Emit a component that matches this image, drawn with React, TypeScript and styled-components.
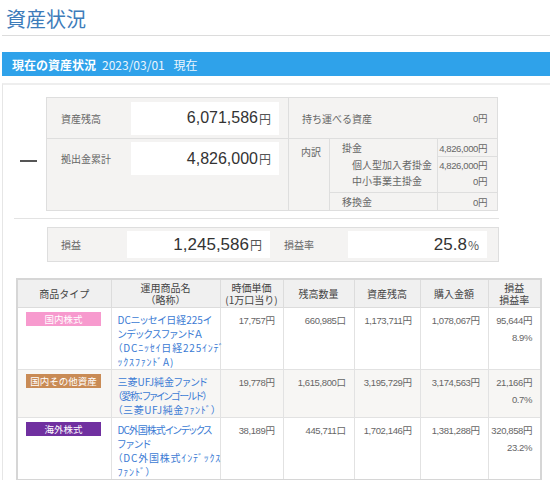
import React from "react";
import styled, { createGlobalStyle } from "styled-components";

const Global = createGlobalStyle`
  html, body { margin: 0; padding: 0; background: #fff; overflow: hidden; }
  body { font-family: "Liberation Sans", "Noto Sans CJK JP", sans-serif; color: #333; }
`;

const Page = styled.div`
  width: 560px;
  height: 480px;
  overflow: hidden;
`;

const Title = styled.h1`
  margin: 0 0 0 2px;
  padding: 7px 0 0 4px;
  height: 28px;
  font-size: 20px;
  font-weight: normal;
  line-height: 24px;
  color: #3d7cba;
  border-bottom: 1px solid #dcdcdc;
  font-family: "Noto Sans CJK JP", sans-serif;
`;

const Bar = styled.div`
  margin: 16px 0 0 2px;
  height: 24px;
  background: #2fa2ea;
  display: flex;
  align-items: center;
  padding-left: 10px;
  gap: 6px;
  color: #fff;
  font-size: 12px;
  font-family: "Noto Sans CJK JP", sans-serif;
`;

const BarStrong = styled.span`
  font-weight: bold;
`;

const BarSub = styled.span`
  color: #eaf5fd;
  word-spacing: 6px;
`;

const Panel = styled.div`
  margin: 7px 0 0 2px;
  border-top: 2px solid #eeeeee;
  border-left: 1px solid #e6e6e6;
  padding-top: 12px;
  height: 400px;
`;

const TopRow = styled.div`
  display: flex;
`;

const Dash = styled.div`
  width: 17px;
  height: 2px;
  background: #555;
  margin: 63px 9px 0 17px;
`;

const SummaryBox = styled.div`
  width: 450px;
  height: 112px;
  border: 1px solid #dedede;
  display: grid;
  grid-template-columns: 84px 157px 41px 108px 60px;
  grid-template-rows: 40px 18px 36px 18px;
  background: #f4f3f2;
  font-family: "Noto Sans CJK JP", sans-serif;
`;

const Cell = styled.div<{ $area: string; $right?: boolean; $top?: boolean; $left?: boolean; $pad?: number; $align?: string }>`
  grid-area: ${(p) => p.$area};
  display: flex;
  align-items: ${(p) => p.$align || "center"};
  justify-content: ${(p) => (p.$right ? "flex-end" : "flex-start")};
  border-top: ${(p) => (p.$top ? "1px solid #dedede" : "none")};
  border-left: ${(p) => (p.$left ? "1px solid #dedede" : "none")};
  padding: 0 ${(p) => (p.$right ? 10 : 0)}px 0 ${(p) => p.$pad ?? 0}px;
  box-sizing: border-box;
  font-size: 10px;
  color: #666;
  white-space: nowrap;
`;

const Label = styled.div<{ $pt?: number }>`
  font-size: 10px;
  color: #666;
  padding-top: ${(p) => p.$pt ?? 0}px;
`;

const ValueBox = styled.div<{ $w: number }>`
  width: ${(p) => p.$w}px;
  height: 33px;
  background: #fff;
  display: flex;
  align-items: center;
  justify-content: flex-end;
  padding-right: 8px;
  box-sizing: border-box;
  font-family: "Liberation Sans", "Noto Sans CJK JP", sans-serif;
  font-size: 16px;
  color: #333;
`;

const Unit = styled.span`
  font-size: 12px;
  color: #555;
  margin-left: 1px;
  font-family: "Noto Sans CJK JP", sans-serif;
`;

const Num = styled.span`
  font-family: "Liberation Sans", "Noto Sans CJK JP", sans-serif;
  font-size: 9.5px;
  color: #666;
  letter-spacing: -0.4px;
  white-space: nowrap;
`;

const Sep = styled.div`
  margin: 7px 0 0 11px;
  width: 485px;
  height: 1px;
  background: #e3e3e3;
`;

const ProfitBox = styled.div`
  margin: 8px 0 0 44px;
  width: 450px;
  height: 33px;
  border: 1px solid #dedede;
  background: #f4f3f2;
  display: flex;
  align-items: center;
  font-family: "Noto Sans CJK JP", sans-serif;
`;

const ProfitLabel = styled.div<{ $w: number; $pl: number }>`
  width: ${(p) => p.$w}px;
  padding-left: ${(p) => p.$pl}px;
  box-sizing: border-box;
  font-size: 10px;
  color: #666;
`;

const ProfitValue = styled(ValueBox)`
  height: 27px;
  font-size: 17px;
`;

const Table = styled.table`
  margin: 16px 0 0 13px;
  width: 524px;
  border-collapse: collapse;
  table-layout: fixed;
  border: 2px solid #d6d6d6;
  border-bottom-width: 3px;
  font-family: "Noto Sans CJK JP", sans-serif;
`;

const Th = styled.th`
  height: 27px;
  background: #f0f0f0;
  border: 1px solid #dcdcdc;
  font-size: 10px;
  font-weight: normal;
  color: #444;
  line-height: 12px;
  padding: 0;
  white-space: nowrap;
`;

const Tr = styled.tr<{ $bg?: string; $h: number }>`
  background: ${(p) => p.$bg || "#fff"};
  height: ${(p) => p.$h}px;
`;

const Td = styled.td<{ $right?: boolean }>`
  border: 1px solid #e2e2e2;
  vertical-align: top;
  padding: 4px ${(p) => (p.$right ? 8 : 2)}px 0 ${(p) => (p.$right ? 0 : 6)}px;
  text-align: ${(p) => (p.$right ? "right" : "left")};
  font-family: "Liberation Sans", "Noto Sans CJK JP", sans-serif;
  font-size: 9.5px;
  color: #666;
  line-height: 17px;
  letter-spacing: -0.4px;
  white-space: nowrap;
`;

const Badge = styled.div<{ $bg: string }>`
  margin: 0 0 0 2px;
  width: 75px;
  height: 14px;
  line-height: 14px;
  background: ${(p) => p.$bg};
  color: #fff;
  font-size: 9.5px;
  text-align: center;
  font-family: "Noto Sans CJK JP", sans-serif;
  letter-spacing: 0;
`;

const Fund = styled.div`
  color: #3b7bd4;
  font-family: "Noto Sans CJK JP", sans-serif;
  font-size: 10px;
  line-height: 14px;
  margin-top: 1px;
  font-feature-settings: "palt";
`;

const FundLine = styled.span<{ $ls: number }>`
  display: block;
  white-space: nowrap;
  letter-spacing: ${(p) => p.$ls}px;
`;

type Line = [string, number];

const rows: {
  type: string;
  color: string;
  h: number;
  bg: string;
  fund: Line[];
  price: string;
  qty: string;
  bal: string;
  buy: string;
  pl: string;
  rate: string;
}[] = [
  {
    type: "国内株式",
    color: "#f79ace",
    h: 60,
    bg: "#fff",
    fund: [
      ["DCニッセイ日経225イ", 0],
      ["ンデックスファンドＡ", 0],
      ["（DCﾆｯｾｲ日経225ｲﾝﾃﾞ", 0.8],
      ["ｯｸｽﾌｧﾝﾄﾞA)", 0.8],
    ],
    price: "17,757円",
    qty: "660,985口",
    bal: "1,173,711円",
    buy: "1,078,067円",
    pl: "95,644円",
    rate: "8.9%",
  },
  {
    type: "国内その他資産",
    color: "#c98b55",
    h: 48,
    bg: "#f7f6f4",
    fund: [
      ["三菱UFJ純金ファンド", 0],
      ["（愛称：ファインゴールド）", -1.3],
      ["（三菱UFJ純金ﾌｧﾝﾄﾞ）", 0.6],
    ],
    price: "19,778円",
    qty: "1,615,800口",
    bal: "3,195,729円",
    buy: "3,174,563円",
    pl: "21,166円",
    rate: "0.7%",
  },
  {
    type: "海外株式",
    color: "#7030a0",
    h: 60,
    bg: "#fff",
    fund: [
      ["DC外国株式インデックス", -1],
      ["ファンド", 0],
      ["（DC外国株式ｲﾝﾃﾞｯｸｽ", 0.8],
      ["ﾌｧﾝﾄﾞ）", 0.8],
    ],
    price: "38,189円",
    qty: "445,711口",
    bal: "1,702,146円",
    buy: "1,381,288円",
    pl: "320,858円",
    rate: "23.2%",
  },
];

const widths = [94, 109, 63, 71, 66, 68, 53];

export default function App() {
  return (
    <Page>
      <Global />
      <Title>資産状況</Title>
      <Bar>
        <BarStrong>現在の資産状況</BarStrong>
        <BarSub>2023/03/01 現在</BarSub>
      </Bar>
      <Panel>
        <TopRow>
          <Dash />
          <SummaryBox>
            <Cell $area="1 / 1 / 2 / 2" $pad={14}>
              <Label>資産残高</Label>
            </Cell>
            <Cell $area="1 / 2 / 2 / 3">
              <ValueBox $w={148}>
                6,071,586<Unit>円</Unit>
              </ValueBox>
            </Cell>
            <Cell $area="2 / 1 / 5 / 2" $pad={14} $top $align="flex-start">
              <Label $pt={12}>拠出金累計</Label>
            </Cell>
            <Cell $area="2 / 2 / 5 / 3" $top $align="flex-start">
              <ValueBox $w={148} style={{ marginTop: 3 }}>
                4,826,000<Unit>円</Unit>
              </ValueBox>
            </Cell>
            <Cell $area="1 / 3 / 2 / 6" $left $pad={13}>
              <Label>持ち運べる資産</Label>
            </Cell>
            <Cell $area="1 / 5 / 2 / 6" $right>
              <Num>0円</Num>
            </Cell>
            <Cell $area="2 / 3 / 5 / 4" $left $top $pad={12} $align="flex-start">
              <Label $pt={5}>内訳</Label>
            </Cell>
            <Cell $area="2 / 4 / 3 / 5" $left $top $pad={12}>
              <Label>掛金</Label>
            </Cell>
            <Cell $area="2 / 5 / 3 / 6" $left $top $right>
              <Num>4,826,000円</Num>
            </Cell>
            <Cell $area="3 / 4 / 4 / 5" $left $pad={22} $align="stretch">
              <Label style={{ lineHeight: "16px", paddingTop: 1 }}>
                個人型加入者掛金
                <br />
                中小事業主掛金
              </Label>
            </Cell>
            <Cell $area="3 / 5 / 4 / 6" $left $top $right $align="stretch">
              <Num style={{ lineHeight: "16px", paddingTop: 1, textAlign: "right" }}>
                4,826,000円
                <br />
                0円
              </Num>
            </Cell>
            <Cell $area="4 / 4 / 5 / 5" $left $top $pad={12}>
              <Label>移換金</Label>
            </Cell>
            <Cell $area="4 / 5 / 5 / 6" $left $top $right>
              <Num>0円</Num>
            </Cell>
          </SummaryBox>
        </TopRow>
        <Sep />
        <ProfitBox>
          <ProfitLabel $w={79} $pl={13}>損益</ProfitLabel>
          <ProfitValue $w={143}>
            1,245,586<Unit>円</Unit>
          </ProfitValue>
          <ProfitLabel $w={78} $pl={14}>損益率</ProfitLabel>
          <ProfitValue $w={139}>
            25.8<Unit>%</Unit>
          </ProfitValue>
        </ProfitBox>
        <Table>
          <colgroup>
            {widths.map((w, i) => (
              <col key={i} style={{ width: w }} />
            ))}
          </colgroup>
          <thead>
            <tr>
              <Th>商品タイプ</Th>
              <Th>
                運用商品名
                <br />
                （略称）
              </Th>
              <Th>
                時価単価
                <br />
                (1万口当り)
              </Th>
              <Th>残高数量</Th>
              <Th>資産残高</Th>
              <Th>購入金額</Th>
              <Th>
                損益
                <br />
                損益率
              </Th>
            </tr>
          </thead>
          <tbody>
            {rows.map((r) => (
              <Tr key={r.type} $bg={r.bg} $h={r.h}>
                <Td>
                  <Badge $bg={r.color}>{r.type}</Badge>
                </Td>
                <Td>
                  <Fund>
                    {r.fund.map(([t, ls]) => (
                      <FundLine key={t} $ls={ls}>
                        {t}
                      </FundLine>
                    ))}
                  </Fund>
                </Td>
                <Td $right>{r.price}</Td>
                <Td $right>{r.qty}</Td>
                <Td $right>{r.bal}</Td>
                <Td $right>{r.buy}</Td>
                <Td $right>
                  {r.pl}
                  <br />
                  {r.rate}
                </Td>
              </Tr>
            ))}
          </tbody>
        </Table>
      </Panel>
    </Page>
  );
}
